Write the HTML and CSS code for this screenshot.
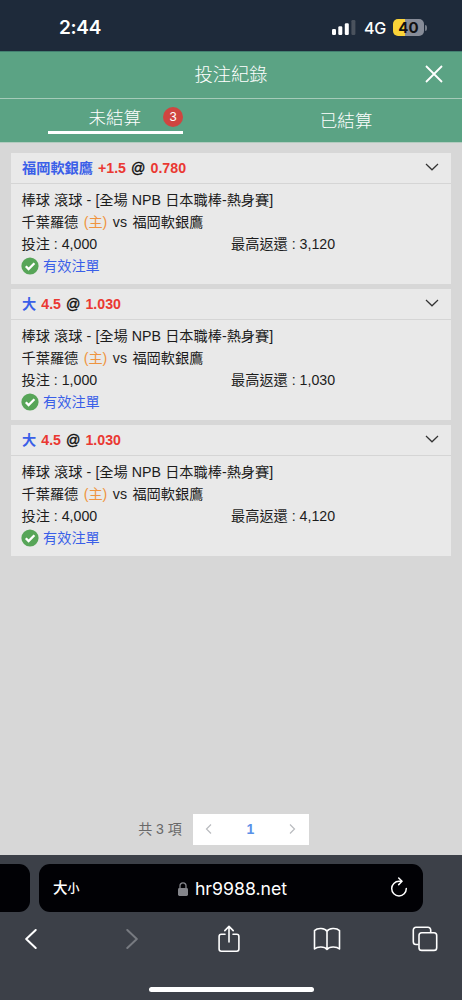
FILE: index.html
```html
<!DOCTYPE html>
<html lang="zh-Hant">
<head>
<meta charset="utf-8">
<meta name="viewport" content="width=device-width">
<title>投注紀錄</title>
<link rel="stylesheet" href="styles.css">
</head>
<body>
<div class="phone">
  <div class="status">
    <span class="time">2:44</span>
    <div class="status-right">
      <svg class="signal" width="24" height="15" viewBox="0 0 24 15"><rect x="0" y="9" width="4" height="6" rx="1.2" fill="#fff"/><rect x="6.3" y="6.3" width="4" height="8.7" rx="1.2" fill="#fff"/><rect x="12.8" y="3.2" width="4" height="11.8" rx="1.2" fill="#fff"/><rect x="19.4" y="0" width="4" height="15" rx="1.2" fill="#4a525d"/></svg>
      <span class="network">4G</span>
      <span class="battery">40</span>
      <span class="battery-tip"></span>
    </div>
  </div>
  <header class="header">
    <h1 class="title">投注紀錄</h1>
    <svg class="close" width="18" height="18" viewBox="0 0 18 18" fill="none" stroke="#fff" stroke-width="1.8"><path d="M1 1l16 16M17 1L1 17"/></svg>
  </header>
  <nav class="tabs">
    <div class="tab">
      <div class="tab-active"><span>未結算</span><span class="badge">3</span></div>
    </div>
    <div class="tab tab-idle">已結算</div>
  </nav>
  <main class="content">
    <section class="card">
      <div class="card-head">
        <div class="pick"><span class="blue">福岡軟銀鷹</span> <span class="red">+1.5</span> <span class="at">@</span> <span class="red">0.780</span></div>
        <svg class="chevron" width="14" height="8" viewBox="0 0 14 8" fill="none" stroke="#333" stroke-width="1.2"><path d="M1 1l6 5.8L13 1"/></svg>
      </div>
      <div class="card-body">
        <div class="line league">棒球 滾球 - [全場 NPB 日本職棒-熱身賽]</div>
        <div class="line teams">千葉羅德 <span class="orange">(主)</span> vs 福岡軟銀鷹</div>
        <div class="line stakes"><span>投注 : 4,000</span><span>最高返還 : 3,120</span></div>
        <div class="line valid"><svg width="18" height="18" viewBox="0 0 18 18"><circle cx="9" cy="9" r="8.6" fill="#57a558"/><path d="M4.800 9.200l2.800 2.900 5.800-5.800" fill="none" stroke="#fff" stroke-width="2.300"/></svg>有效注單</div>
      </div>
    </section>
    <section class="card">
      <div class="card-head">
        <div class="pick"><span class="blue">大</span> <span class="red">4.5</span> <span class="at">@</span> <span class="red">1.030</span></div>
        <svg class="chevron" width="14" height="8" viewBox="0 0 14 8" fill="none" stroke="#333" stroke-width="1.2"><path d="M1 1l6 5.8L13 1"/></svg>
      </div>
      <div class="card-body">
        <div class="line league">棒球 滾球 - [全場 NPB 日本職棒-熱身賽]</div>
        <div class="line teams">千葉羅德 <span class="orange">(主)</span> vs 福岡軟銀鷹</div>
        <div class="line stakes"><span>投注 : 1,000</span><span>最高返還 : 1,030</span></div>
        <div class="line valid"><svg width="18" height="18" viewBox="0 0 18 18"><circle cx="9" cy="9" r="8.6" fill="#57a558"/><path d="M4.800 9.200l2.800 2.900 5.800-5.800" fill="none" stroke="#fff" stroke-width="2.300"/></svg>有效注單</div>
      </div>
    </section>
    <section class="card">
      <div class="card-head">
        <div class="pick"><span class="blue">大</span> <span class="red">4.5</span> <span class="at">@</span> <span class="red">1.030</span></div>
        <svg class="chevron" width="14" height="8" viewBox="0 0 14 8" fill="none" stroke="#333" stroke-width="1.2"><path d="M1 1l6 5.8L13 1"/></svg>
      </div>
      <div class="card-body">
        <div class="line league">棒球 滾球 - [全場 NPB 日本職棒-熱身賽]</div>
        <div class="line teams">千葉羅德 <span class="orange">(主)</span> vs 福岡軟銀鷹</div>
        <div class="line stakes"><span>投注 : 4,000</span><span>最高返還 : 4,120</span></div>
        <div class="line valid"><svg width="18" height="18" viewBox="0 0 18 18"><circle cx="9" cy="9" r="8.6" fill="#57a558"/><path d="M4.800 9.200l2.800 2.900 5.800-5.800" fill="none" stroke="#fff" stroke-width="2.300"/></svg>有效注單</div>
      </div>
    </section>
    <div class="pager">
      <span class="total">共 3 項</span>
      <div class="pages">
        <svg width="7" height="12" viewBox="0 0 7 12" fill="none" stroke="#b9bbbf" stroke-width="1.2"><path d="M6 1.500L1.500 6 6 10.500"/></svg>
        <span class="page">1</span>
        <svg width="7" height="12" viewBox="0 0 7 12" fill="none" stroke="#b9bbbf" stroke-width="1.2"><path d="M1 1.500L5.500 6 1 10.500"/></svg>
      </div>
    </div>
  </main>
  <footer class="browser">
    <div class="address-row">
      <div class="prev-tab"></div>
      <div class="address">
        <span class="aa">大<small>小</small></span>
        <span class="host"><svg width="10" height="14" viewBox="0 0 10 14"><rect x="0" y="6" width="10" height="8" rx="1.4" fill="#84858b"/><path d="M2 6.500V3.800a3 3 0 0 1 6 0v2.700" fill="none" stroke="#84858b" stroke-width="1.3"/></svg>hr9988.net</span>
        <svg class="reload" width="18" height="20" viewBox="0 0 18 20" fill="none" stroke="#fff" stroke-width="1.5" stroke-linecap="round" stroke-linejoin="round"><path d="M11.500 4.300H9a7.300 7.300 0 1 0 7.300 7.300"/><path d="M8.700 1l3.300 3.300-3.300 3.300"/></svg>
      </div>
    </div>
    <div class="toolbar">
      <span class="tool"><svg width="12" height="20" viewBox="0 0 12 20" fill="none" stroke="#fff" stroke-width="2" stroke-linecap="round" stroke-linejoin="round"><path d="M10.700 1L1.200 10l9.500 9"/></svg></span>
      <span class="tool forward"><svg width="12" height="20" viewBox="0 0 12 20" fill="none" stroke="#777a80" stroke-width="2" stroke-linecap="round" stroke-linejoin="round"><path d="M1.300 1l9.500 9-9.500 9"/></svg></span>
      <span class="tool share"><svg width="22" height="28" viewBox="0 0 22 28" fill="none" stroke="#fff" stroke-width="1.600" stroke-linecap="round" stroke-linejoin="round"><path d="M7 9.200H3.300A2.200 2.200 0 0 0 1.100 11.400v12.600a2.200 2.200 0 0 0 2.200 2.200h15.400a2.200 2.200 0 0 0 2.200-2.200v-12.600a2.200 2.200 0 0 0-2.200-2.200H15"/><path d="M11 17V1.500M6.800 5.600L11 1.400l4.200 4.200"/></svg></span>
      <span class="tool"><svg width="28" height="24" viewBox="0 0 28 24" fill="none" stroke="#fff" stroke-width="1.600" stroke-linejoin="round"><path d="M14 4.300C12 .9 4.500.6 1.500 3.600v18.400c3-2.800 10.200-2.600 12.500.4 2.300-3 9.500-3.200 12.500-.4V3.600C23.500.6 16 .9 14 4.300zM14 4.300v18.100"/></svg></span>
      <span class="tool"><svg width="26" height="26" viewBox="0 0 26 26" fill="none" stroke="#fff" stroke-width="1.600"><path d="M6.500 18.500H4A2.700 2.700 0 0 1 1.300 15.800V4A2.700 2.700 0 0 1 4 1.300h12A2.700 2.700 0 0 1 18.700 4v2.500"/><rect x="7" y="6.700" width="17.700" height="17.700" rx="2.700"/></svg></span>
    </div>
    <div class="home-indicator"></div>
  </footer>
</div>
</body>
</html>
```
FILE: styles.css
```css
* { box-sizing: border-box; }
body { margin: 0; }
svg { display: block; flex: none; }
.phone {
  width: 462px;
  height: 1000px;
  display: flex;
  flex-direction: column;
  overflow: hidden;
  background: #d7d7d7;
  font-family: "Liberation Sans", "Noto Sans CJK TC", sans-serif;
}
.status {
  height: 51px;
  flex: none;
  display: flex;
  justify-content: space-between;
  align-items: center;
  padding: 4px 35px 0 59px;
  background: #1e2a3a;
  color: #fff;
  font-family: Inter, sans-serif;
}
.time { font-size: 19px; font-weight: 600; letter-spacing: -0.3px; }
.status-right { display: flex; align-items: center; }
.network { font-size: 16px; font-weight: 500; margin-left: 8px; width: 29px; letter-spacing: -0.3px; }
.battery {
  width: 31px;
  height: 17px;
  border-radius: 5px;
  background: linear-gradient(90deg, #fbd438 40%, #878c98 40%);
  color: #111;
  font-size: 15px;
  font-weight: 700;
  line-height: 17px;
  text-align: center;
}
.battery-tip { width: 2px; height: 6px; margin-left: 1px; border-radius: 0 2px 2px 0; background: #777d88; }
.header {
  height: 48px;
  flex: none;
  display: grid;
  grid-template-columns: 1fr auto 1fr;
  align-items: center;
  padding: 0 19px;
  background: #5ba384;
  border-top: 1px solid #438071;
  border-bottom: 1px solid #a5cbb9;
}
.title { grid-column: 2; margin: 0; font-size: 18.3px; line-height: 44px; font-weight: 300; color: #fff; }
.close { justify-self: end; margin-top: -2px; }
.tabs {
  height: 44px;
  flex: none;
  display: grid;
  grid-template-columns: 1fr 1fr;
  background: #5ba384;
  border-bottom: 1px solid #b3cbbf;
  color: #fff;
  font-size: 17.5px;
  font-weight: 300;
}
.tab { display: flex; justify-content: center; align-items: center; }
.tab-idle { line-height: 42px; padding-right: 1px; }
.tab-active {
  width: 135px;
  height: 35px;
  align-self: flex-start;
  display: flex;
  justify-content: flex-end;
  align-items: center;
  gap: 22px;
  padding-top: 3px;
  border-bottom: 3px solid #fff;
}
.badge {
  width: 20px;
  height: 20px;
  border-radius: 50%;
  background: #cf4540;
  font-size: 13px;
  line-height: 20px;
  text-align: center;
}
.content {
  flex: 1;
  display: flex;
  flex-direction: column;
  gap: 5px;
  padding: 10px 11px 10px;
}
.card { height: 131px; background: #e9e9e9; }
.card-head {
  height: 31px;
  display: flex;
  justify-content: space-between;
  align-items: center;
  padding: 0 12px 0 11px;
  border-bottom: 1px solid #d5d5d5;
}
.pick { font-size: 14.2px; line-height: 30px; font-weight: 700; word-spacing: 1.1px; color: #111; }
.at { font-weight: 400; -webkit-text-stroke: 0.4px #111; }
.chevron { margin-top: -3px; }
.blue { color: #3a5fe8; }
.red { color: #ea3832; }
.orange { color: #ef9440; }
.card-body { padding: 5px 11px 0 10.5px; }
.line { height: 22px; font-size: 14.2px; line-height: 22px; color: #1c1c1c; white-space: pre; }
.league { word-spacing: 0.2px; }
.teams { word-spacing: 1.5px; }
.stakes { display: grid; grid-template-columns: 209.5px 1fr; height: 21.5px; line-height: 22px; }
.valid { display: flex; align-items: center; gap: 3.5px; height: 23px; line-height: 23px; color: #3a5fe8; }
.valid svg { margin-left: -0.5px; margin-right: 0.5px; }
.pager { margin-top: auto; display: flex; justify-content: center; align-items: center; padding-right: 15px; gap: 11px; }
.total { font-size: 14px; padding-bottom: 3px; color: #696969; }
.pages {
  width: 116px;
  height: 31px;
  display: flex;
  justify-content: space-between;
  align-items: center;
  padding: 0 13px 1px 12px;
  background: #fff;
}
.page { font-size: 14px; font-weight: 700; color: #5a91e8; }
.browser { height: 145px; flex: none; background: #3c4048; padding-top: 9px; }
.address-row { display: flex; gap: 9px; }
.prev-tab { width: 30px; height: 48px; border-radius: 0 11px 11px 0; background: #010105; }
.address {
  width: 384px;
  height: 48px;
  display: grid;
  grid-template-columns: 1fr auto 1fr;
  align-items: center;
  padding: 0 15px 0 14px;
  border-radius: 11px;
  background: #010105;
  color: #fff;
}
.aa { font-size: 14.5px; font-weight: 500; line-height: 48px; }
.aa small { font-size: 12px; }
.host { display: flex; align-items: center; gap: 7px; padding-left: 4px; font-family: Inter, sans-serif; font-size: 17.7px; }
.reload { justify-self: end; margin-top: -3px; }
.toolbar { height: 54px; display: flex; align-items: center; justify-content: space-between; padding: 0 22px 0 16px; }
.tool { width: 30px; display: flex; justify-content: center; }
.forward { padding-left: 4px; }
.share { padding-left: 2px; }
.home-indicator { width: 165px; height: 5px; margin: 21px auto 0; border-radius: 3px; background: #fff; }
```
